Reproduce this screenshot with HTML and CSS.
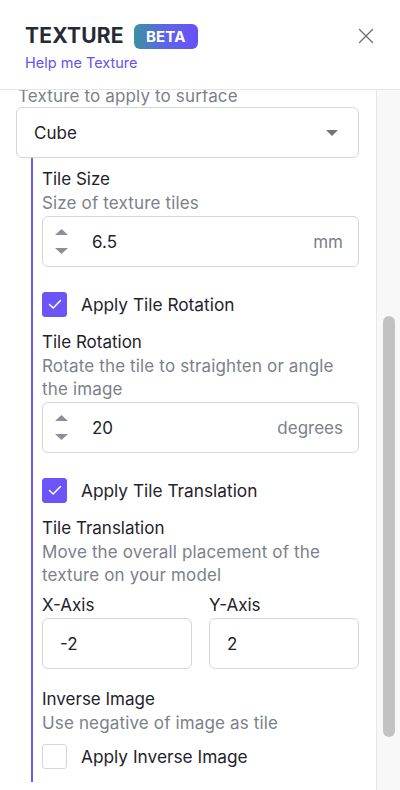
FILE: index.html
```html
<!DOCTYPE html>
<html lang="en">
<head>
<meta charset="utf-8">
<title>Texture</title>
<link rel="stylesheet" href="styles.css">
</head>
<body>
<div class="panel">
  <header class="header">
    <div class="header-main">
      <div class="title-row">
        <h1 class="title">TEXTURE</h1>
        <span class="badge">BETA</span>
      </div>
      <a class="help" href="#">Help me Texture</a>
    </div>
    <button class="close" aria-label="Close">
      <svg width="16" height="16" viewBox="0 0 16 16"><path d="M1.5 1.5 L14.5 14.5 M14.5 1.5 L1.5 14.5" stroke="#6b7079" stroke-width="1.4" fill="none" stroke-linecap="round"/></svg>
    </button>
  </header>
  <div class="body">
    <div class="scroll">
      <div class="content">
        <div class="field-desc top-desc">Texture to apply to surface</div>
        <div class="select">
          <span>Cube</span>
          <svg class="caret" width="12" height="6" viewBox="0 0 12 6"><path d="M0 0 H12 L6 6 Z" fill="#6e737c"/></svg>
        </div>
        <div class="nested">
          <div class="field-label">Tile Size</div>
          <div class="field-desc">Size of texture tiles</div>
          <div class="number">
            <div class="spin">
              <svg width="13" height="6" viewBox="0 0 13 6"><path d="M0 6 H13 L6.5 0 Z" fill="#8a8f98"/></svg>
              <svg width="13" height="6" viewBox="0 0 13 6"><path d="M0 0 H13 L6.5 6 Z" fill="#8a8f98"/></svg>
            </div>
            <span class="value">6.5</span>
            <span class="unit">mm</span>
          </div>

          <label class="check-row">
            <span class="box checked"><svg width="14" height="11" viewBox="0 0 14 11"><path d="M1.5 5.5 L5.2 9 L12.5 1.5" stroke="#fff" stroke-width="1.6" fill="none" stroke-linecap="round" stroke-linejoin="round"/></svg></span>
            <span class="check-label">Apply Tile Rotation</span>
          </label>

          <div class="field-label">Tile Rotation</div>
          <div class="field-desc">Rotate the tile to straighten or angle the image</div>
          <div class="number">
            <div class="spin">
              <svg width="13" height="6" viewBox="0 0 13 6"><path d="M0 6 H13 L6.5 0 Z" fill="#8a8f98"/></svg>
              <svg width="13" height="6" viewBox="0 0 13 6"><path d="M0 0 H13 L6.5 6 Z" fill="#8a8f98"/></svg>
            </div>
            <span class="value">20</span>
            <span class="unit">degrees</span>
          </div>

          <label class="check-row">
            <span class="box checked"><svg width="14" height="11" viewBox="0 0 14 11"><path d="M1.5 5.5 L5.2 9 L12.5 1.5" stroke="#fff" stroke-width="1.6" fill="none" stroke-linecap="round" stroke-linejoin="round"/></svg></span>
            <span class="check-label">Apply Tile Translation</span>
          </label>

          <div class="field-label">Tile Translation</div>
          <div class="field-desc">Move the overall placement of the texture on your model</div>
          <div class="axes">
            <div class="axis">
              <div class="field-label">X-Axis</div>
              <div class="text-input">-2</div>
            </div>
            <div class="axis">
              <div class="field-label">Y-Axis</div>
              <div class="text-input">2</div>
            </div>
          </div>

          <div class="field-label inverse">Inverse Image</div>
          <div class="field-desc">Use negative of image as tile</div>
          <label class="check-row last">
            <span class="box"></span>
            <span class="check-label">Apply Inverse Image</span>
          </label>
        </div>
      </div>
    </div>
    <div class="scrollbar"><div class="thumb"></div></div>
  </div>
</div>
</body>
</html>
```

FILE: styles.css
```css
* { box-sizing: border-box; }
html, body {
  margin: 0;
  padding: 0;
  background: #fff;
}
body {
  width: 400px;
  height: 790px;
  overflow: hidden;
  font-family: Inter, "Noto Sans", "Liberation Sans", sans-serif;
  color: #1f232b;
}
.panel {
  display: flex;
  flex-direction: column;
  height: 790px;
}
.header {
  height: 90px;
  flex: none;
  display: flex;
  justify-content: space-between;
  align-items: flex-start;
  padding: 21px 26px 0 25px;
  border-bottom: 1px solid #e6e6e8;
}
.header-main {
  display: flex;
  flex-direction: column;
}
.title-row {
  display: flex;
  align-items: center;
  gap: 10px;
}
.title {
  margin: 0;
  font-size: 21px;
  font-weight: 700;
  line-height: 30px;
  letter-spacing: 0.2px;
  color: #252a33;
}
.badge {
  display: inline-flex;
  align-items: center;
  justify-content: center;
  width: 64px;
  height: 25px;
  border-radius: 6px;
  background: linear-gradient(90deg, #3a92a2 0%, #5a67e6 45%, #6a4ff7 100%);
  color: #fff;
  font-weight: 700;
  font-size: 15px;
  letter-spacing: 0.2px;
}
.help {
  margin-top: 2px;
  font-size: 14.5px;
  line-height: 20px;
  color: #6a4ff5;
  text-decoration: none;
}
.close {
  margin-top: 7px;
  padding: 0;
  border: 0;
  background: none;
  width: 16px;
  height: 16px;
  display: flex;
}
.body {
  flex: 1;
  display: flex;
  min-height: 0;
}
.scroll {
  flex: 1;
  overflow: hidden;
}
.content {
  margin-top: -5px;
  padding: 0 17px 0 16px;
}
.field-label {
  font-size: 17px;
  line-height: 23px;
  margin-bottom: 1px;
  color: #1f232b;
}
.field-desc {
  font-size: 17px;
  line-height: 23px;
  letter-spacing: 0.15px;
  color: #7b818b;
}
.top-desc {
  padding-left: 2px;
  line-height: 22px;
}
.select {
  height: 51px;
  border: 1.5px solid #d5d6da;
  border-radius: 6px;
  display: flex;
  align-items: center;
  justify-content: space-between;
  padding: 0 20px 0 17px;
  font-size: 17px;
  margin-top: 0;
}
.nested {
  margin-left: 15px;
  border-left: 2px solid #6b5af0;
  padding: 10px 0 13px 9px;
}
.number {
  margin-top: 1px;
  height: 51px;
  border: 1.5px solid #d5d6da;
  border-radius: 6px;
  display: flex;
  align-items: center;
  padding: 0 15px 0 12px;
  font-size: 17px;
}
.spin {
  display: flex;
  flex-direction: column;
  gap: 13px;
  width: 13px;
}
.spin svg { display: block; }
.value {
  margin-left: 24px;
  flex: 1;
  color: #1f232b;
}
.unit {
  color: #7b818b;
}
.check-row {
  display: flex;
  align-items: center;
  margin-top: 25px;
  margin-bottom: 14px;
}
.box {
  width: 25px;
  height: 25px;
  border-radius: 3px;
  border: 1.5px solid #d5d6da;
  display: flex;
  align-items: center;
  justify-content: center;
  flex: none;
}
.box.checked {
  background: #6b55f6;
  border-color: #6b55f6;
}
.check-label {
  margin-left: 14px;
  font-size: 17.3px;
  color: #1f232b;
}
.axes {
  display: grid;
  grid-template-columns: 1fr 1fr;
  gap: 17px;
  margin-top: 7px;
}
.text-input {
  height: 51px;
  border: 1.5px solid #d5d6da;
  border-radius: 6px;
  display: flex;
  align-items: center;
  padding-left: 17px;
  font-size: 17px;
}
.inverse {
  margin-top: 19px;
}
.check-row.last {
  margin-top: 9px;
  margin-bottom: 0;
}
.scrollbar {
  width: 24px;
  flex: none;
  background: #f8f8f8;
  border-left: 1px solid #e7e7e7;
  padding: 226px 0 0 6px;
}
.thumb {
  width: 12px;
  height: 421px;
  border-radius: 6px;
  background: #c2c2c2;
}
```
